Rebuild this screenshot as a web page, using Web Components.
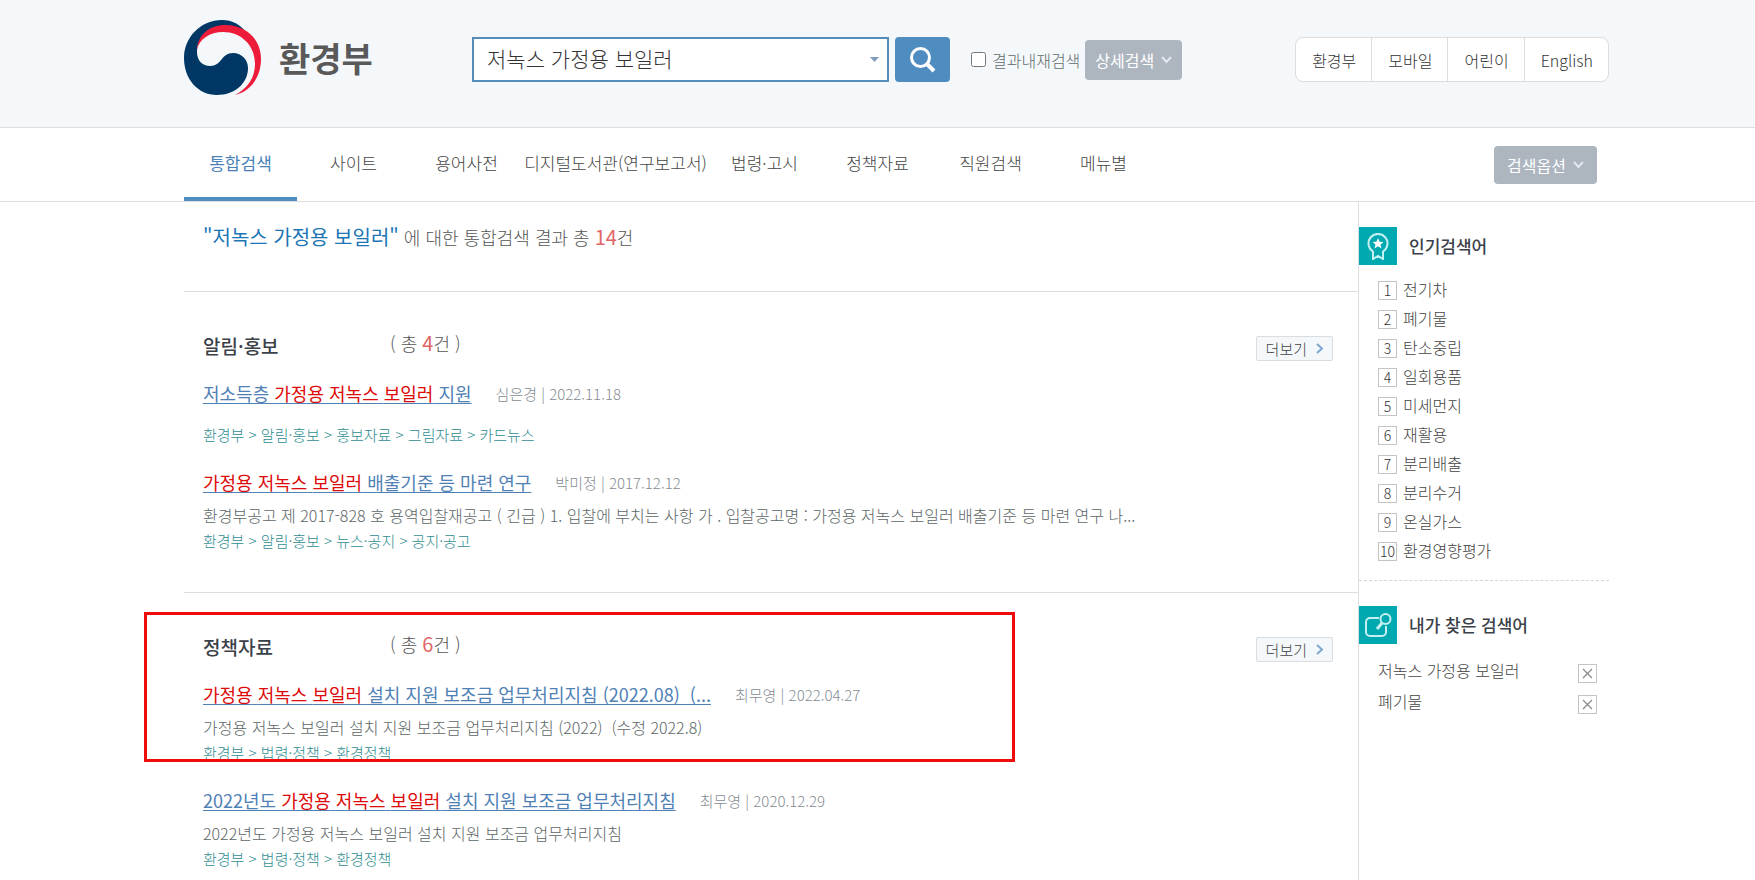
<!DOCTYPE html>
<html lang="ko">
<head>
<meta charset="utf-8">
<title>환경부 통합검색</title>
<style>
    body {
        margin: 0;
        background: #fff;
        color: #4c4c4c;
        font-family: "Noto Sans CJK KR", sans-serif;
        font-weight: 300;
        font-size: 16px;
        --gutter-left: 184px;
        --gutter-right: 146px;
        --line: #dddddd;
        --blue: #4f8dc1;
    }
</style>
</head>
<body>
<search-page></search-page>

<script>
const define = (name, html, setup) => {
    const template = document.createElement('template');
    template.innerHTML = html;

    window.customElements.define(name, class extends HTMLElement {
        constructor() {
            super();
            this.attachShadow({ mode: 'open' });
            this.shadowRoot.appendChild(template.content.cloneNode(true));
        }

        connectedCallback() {
            setup && setup(this, this.shadowRoot);
        }
    });
};

define('me-logo', `
    <style>
        :host { display: block; }
        a {
            display: flex;
            align-items: center;
            gap: 17px;
            color: #595959;
            font-size: 34px;
            line-height: 44px;
            font-weight: 700;
            text-decoration: none;
        }
        svg { display: block; width: 78px; height: 76px; }
    </style>
    <a href="#">
        <svg viewBox="0 0 78 76" aria-hidden="true">
            <path fill="#003764" d="M65 16C57 4 48 0 38 0C17 0 0 17 0 38C0 59 14 75 33 75C50 75 64 64 64 48C64 40 58 33 49 33C37 33 38 46 26 46C19 46 13 41 13 32C13 16 26 6 40 6C51 6 59 10 65 16Z"/>
            <path fill="#ee1c3b" d="M13 30C14 14 26 5 41 5C62 5 77 19 77 39C77 57 67 71 51 75C63 69 71 58 71 44C71 25 57 12 39 12C26 12 15 19 13 30Z"/>
        </svg>
        <span>환경부</span>
    </a>
`);

define('chevron-button', `
    <style>
        :host { display: block; }
        button {
            display: flex;
            align-items: center;
            gap: 7px;
            height: var(--button-height, 38px);
            padding: 0 var(--button-pad, 13px);
            border: 0;
            border-radius: 4px;
            background: #adb5bf;
            color: #fff;
            font: inherit;
            font-weight: 400;
        }
    </style>
    <button type="button">
        <slot></slot>
        <svg width="11" height="8" viewBox="0 0 11 8" fill="none" stroke="#e4e8ec" stroke-width="2" aria-hidden="true"><path d="M1 1L5.5 6L10 1"/></svg>
    </button>
`);

define('search-form', `
    <style>
        :host { display: block; }
        form { display: flex; align-items: center; }
        .box {
            box-sizing: border-box;
            display: flex;
            align-items: center;
            width: 417px;
            height: 45px;
            padding: 0 8px 0 13px;
            border: 2px solid #568cb8;
            background: #fff;
        }
        .box input {
            flex: 1;
            min-width: 0;
            padding: 0 0 4px;
            border: 0;
            outline: 0;
            background: none;
            color: #333;
            font: inherit;
            font-size: 21px;
        }
        .go {
            display: grid;
            place-items: center;
            width: 55px;
            height: 45px;
            margin: 0 21px 0 6px;
            padding: 0;
            border: 0;
            border-radius: 4px;
            background: var(--blue);
        }
        label {
            display: flex;
            align-items: center;
            gap: 6px;
            margin-right: 5px;
            color: #5f6c6c;
        }
        label input { width: 15px; height: 15px; margin: 0; }
        chevron-button { --button-height: 40px; --button-pad: 10px; }
    </style>
    <form>
        <div class="box">
            <input type="text" aria-label="검색어" value="저녹스 가정용 보일러">
            <svg width="9" height="5" viewBox="0 0 9 5" aria-hidden="true"><path fill="#7f9dbb" d="M0 0H9L4.5 5Z"/></svg>
        </div>
        <button class="go" type="button" aria-label="검색">
            <svg width="26" height="26" viewBox="0 0 26 26" fill="none" stroke="#fff" aria-hidden="true">
                <circle cx="10.500" cy="10.500" r="9" stroke-width="3"/>
                <path d="M17 17L24 24" stroke-width="4"/>
            </svg>
        </button>
        <label><input type="checkbox">결과내재검색</label>
        <chevron-button>상세검색</chevron-button>
    </form>
`);

define('site-links', `
    <style>
        :host { display: block; }
        nav {
            box-sizing: border-box;
            display: flex;
            height: 45px;
            border: 1px solid var(--line);
            border-radius: 8px;
            background: #fff;
        }
        a {
            display: flex;
            align-items: center;
            padding: 0 15px 0 16px;
            color: #333;
            text-decoration: none;
        }
        a + a { border-left: 1px solid var(--line); }
    </style>
    <nav>
        <a href="#">환경부</a>
        <a href="#">모바일</a>
        <a href="#">어린이</a>
        <a href="#">English</a>
    </nav>
`);

define('page-header', `
    <style>
        :host { display: block; border-bottom: 1px solid var(--line); background: #f4f8fb; }
        header {
            display: flex;
            align-items: flex-start;
            padding: 37px var(--gutter-right) 45px var(--gutter-left);
        }
        me-logo { width: 288px; margin: -17px 0 -14px; }
        site-links { margin-left: auto; }
    </style>
    <header>
        <me-logo></me-logo>
        <search-form></search-form>
        <site-links></site-links>
    </header>
`);

define('category-tabs', `
    <style>
        :host { display: block; border-bottom: 1px solid var(--line); }
        nav {
            display: flex;
            align-items: center;
            height: 73px;
            padding: 0 158px 0 var(--gutter-left);
        }
        a {
            box-sizing: border-box;
            width: 113px;
            height: 73px;
            border-bottom: 4px solid transparent;
            color: #444;
            font-size: 17px;
            line-height: 70px;
            text-align: center;
            white-space: nowrap;
            text-decoration: none;
        }
        a.wide { width: 185px; }
        a.active {
            border-color: var(--blue);
            color: #4a82b8;
            font-weight: 400;
        }
        chevron-button { margin-left: auto; }
    </style>
    <nav>
        <a class="active" href="#">통합검색</a>
        <a href="#">사이트</a>
        <a href="#">용어사전</a>
        <a class="wide" href="#">디지털도서관(연구보고서)</a>
        <a href="#">법령·고시</a>
        <a href="#">정책자료</a>
        <a href="#">직원검색</a>
        <a href="#">메뉴별</a>
        <chevron-button>검색옵션</chevron-button>
    </nav>
`);

define('result-summary', `
    <style>
        :host { display: block; border-bottom: 1px solid var(--line); }
        p {
            margin: 0;
            padding: 20px 19px 39px;
            color: #555;
            font-size: 18px;
            line-height: 30px;
        }
        b { color: #1c75b5; font-size: 20px; font-weight: 400; }
        em { color: #e06666; font-size: 20px; font-style: normal; font-weight: 400; }
    </style>
    <p><b>"저녹스 가정용 보일러"</b> 에 대한 통합검색 결과 총 <em>14</em>건</p>
`);

define('result-section', `
    <style>
        :host {
            display: block;
            position: relative;
            padding: 40px 25px 38px 19px;
            border-bottom: 1px solid var(--line);
        }
        :host(:last-child) { padding-bottom: 0; border: 0; }
        header { display: flex; align-items: center; height: 28px; margin-bottom: 13px; }
        h2 {
            width: 187px;
            margin: 0;
            color: #3b4148;
            font-size: 19px;
            line-height: 28px;
            font-weight: 500;
        }
        p { margin: 0 0 6px; color: #555; font-size: 18px; line-height: 24px; }
        em { color: #e06666; font-size: 20px; font-style: normal; font-weight: 400; }
        button {
            display: flex;
            align-items: center;
            gap: 9px;
            height: 25px;
            margin: 4px 0 0 auto;
            padding: 0 9px;
            border: 1px solid #d9dde0;
            border-radius: 2px;
            background: #f4f8fb;
            color: #444;
            font: inherit;
            font-size: 15px;
        }
        .list { display: grid; gap: 14px; }
    </style>
    <header>
        <h2></h2>
        <p>( 총 <em></em>건 )</p>
        <button type="button">더보기<svg width="7" height="11" viewBox="0 0 7 11" fill="none" stroke="#7fa9d0" stroke-width="2" aria-hidden="true"><path d="M1 1L6 5.5L1 10"/></svg></button>
    </header>
    <div class="list"><slot></slot></div>
    <slot name="mark"></slot>
`, (host, root) => {
    root.querySelector('h2').textContent = host.getAttribute('heading');
    root.querySelector('em').textContent = host.getAttribute('count');
});

define('result-item', `
    <style>
        :host { display: block; }
        .head { display: flex; align-items: center; gap: 24px; height: 40px; }
        a {
            color: #4f81b5;
            font-size: 18px;
            font-weight: 400;
            text-decoration: underline;
            text-decoration-thickness: 1px;
            text-underline-offset: 2px;
            white-space: pre;
        }
        ::slotted(mark) { background: none; color: #dd0a0a; }
        small { color: #848c93; font-size: 15px; }
        p { margin: 0; min-height: 9px; color: #5c6666; font-size: 16px; line-height: 26px; white-space: pre; }
        .path { color: #2f8d90; font-size: 15px; }
    </style>
    <div class="head"><a href="#"><slot></slot></a><small></small></div>
    <p class="text"></p>
    <p class="path"></p>
`, (host, root) => {
    root.querySelector('small').textContent = host.getAttribute('by');
    root.querySelector('.text').textContent = host.getAttribute('text') || '';
    root.querySelector('.path').textContent = host.getAttribute('path');
});

// red frame laid over a section
define('red-frame', `
    <style>
        :host {
            box-sizing: border-box;
            position: absolute;
            top: 19px;
            left: -40px;
            width: 871px;
            height: 150px;
            border: 3px solid #ee0c0c;
            pointer-events: none;
        }
    </style>
`);

define('side-panel', `
    <style>
        :host { display: block; padding: 25px 0 14px; }
        :host(:not(:last-child)) { border-bottom: 1px dashed #d5d5d5; }
        header { display: flex; align-items: center; gap: 12px; }
        .icon { display: grid; place-items: center; width: 38px; height: 38px; background: #00a9b0; }
        h2 { margin: 0; color: #3b4148; font-size: 17px; line-height: 24px; font-weight: 500; }
        .body { padding: 11px 12px 0 19px; }
    </style>
    <header>
        <div class="icon"><slot name="icon"></slot></div>
        <h2></h2>
    </header>
    <div class="body"><slot></slot></div>
`, (host, root) => {
    root.querySelector('h2').textContent = host.getAttribute('heading');
});

define('rank-list', `
    <style>
        :host { display: block; }
        ol { margin: 0; padding: 0; list-style: none; }
        li { display: flex; align-items: center; gap: 6px; height: 29px; }
        span {
            box-sizing: border-box;
            width: 19px;
            height: 19px;
            border: 1px solid #c4c4c4;
            color: #333;
            font-size: 14px;
            line-height: 17px;
            text-align: center;
        }
        a { color: #444; line-height: 24px; padding-bottom: 3px; text-decoration: none; }
    </style>
    <ol></ol>
`, (host, root) => {
    root.querySelector('ol').innerHTML = host.getAttribute('words').split(',')
        .map((word, i) => `<li><span>${i + 1}</span><a href="#">${word}</a></li>`).join('');
});

define('my-words', `
    <style>
        :host { display: block; padding-top: 2px; }
        ul { margin: 0; padding: 0; list-style: none; }
        li { display: flex; align-items: center; justify-content: space-between; height: 31px; }
        a { color: #444; line-height: 24px; padding-bottom: 5px; text-decoration: none; }
        button {
            display: grid;
            place-items: center;
            width: 19px;
            height: 19px;
            margin: 2px 0 0;
            padding: 0;
            border: 1px solid #c4c4c4;
            background: #fff;
        }
    </style>
    <ul></ul>
`, (host, root) => {
    root.querySelector('ul').innerHTML = host.getAttribute('words').split(',')
        .map((word) => `<li><a href="#">${word}</a><button type="button" aria-label="${word} 삭제"><svg width="11" height="11" viewBox="0 0 11 11" stroke="#8a8a8a" stroke-width="1.2"><path d="M1 1L10 10M10 1L1 10"/></svg></button></li>`).join('');
});

define('search-page', `
    <style>
        :host { display: flex; flex-direction: column; height: 100vh; }
        .columns {
            flex: 1;
            display: grid;
            grid-template-columns: 1fr 251px;
            min-height: 0;
            padding: 0 var(--gutter-right) 0 var(--gutter-left);
        }
        main { min-width: 0; }
        aside { border-left: 1px solid var(--line); }
    </style>
    <page-header></page-header>
    <category-tabs></category-tabs>
    <div class="columns">
        <main>
            <result-summary></result-summary>
            <result-section heading="알림·홍보" count="4">
                <result-item by="심은경 | 2022.11.18" path="환경부 > 알림·홍보 > 홍보자료 > 그림자료 > 카드뉴스">저소득층 <mark>가정용</mark> <mark>저녹스</mark> <mark>보일러</mark> 지원</result-item>
                <result-item by="박미정 | 2017.12.12" text="환경부공고 제 2017-828 호 용역입찰재공고 ( 긴급 ) 1. 입찰에 부치는 사항 가 . 입찰공고명 : 가정용 저녹스 보일러 배출기준 등 마련 연구 나..." path="환경부 > 알림·홍보 > 뉴스·공지 > 공지·공고"><mark>가정용</mark> <mark>저녹스</mark> <mark>보일러</mark> 배출기준 등 마련 연구</result-item>
            </result-section>
            <result-section heading="정책자료" count="6">
                <result-item by="최무영 | 2022.04.27" text="가정용 저녹스 보일러 설치 지원 보조금 업무처리지침 (2022)  (수정 2022.8)" path="환경부 > 법령·정책 > 환경정책"><mark>가정용</mark> <mark>저녹스</mark> <mark>보일러</mark> 설치 지원 보조금 업무처리지침 (2022.08)  (...</result-item>
                <result-item by="최무영 | 2020.12.29" text="2022년도 가정용 저녹스 보일러 설치 지원 보조금 업무처리지침" path="환경부 > 법령·정책 > 환경정책">2022년도 <mark>가정용</mark> <mark>저녹스</mark> <mark>보일러</mark> 설치 지원 보조금 업무처리지침</result-item>
                <red-frame slot="mark"></red-frame>
            </result-section>
        </main>
        <aside>
            <side-panel heading="인기검색어">
                <svg slot="icon" width="22" height="27" viewBox="0 0 22 27" fill="none" stroke="#c4f0f2" stroke-width="2" aria-hidden="true">
                    <path d="M6 18.500A9.500 9.500 0 1 1 16 18.500M6 18V26L11 23L16 26V18"/>
                    <path fill="#fff" stroke="none" d="M11 5L12.600 8.700L16.500 9L13.500 11.500L14.500 15.500L11 13.300L7.500 15.500L8.500 11.500L5.500 9L9.400 8.700Z"/>
                </svg>
                <rank-list words="전기차,폐기물,탄소중립,일회용품,미세먼지,재활용,분리배출,분리수거,온실가스,환경영향평가"></rank-list>
            </side-panel>
            <side-panel heading="내가 찾은 검색어">
                <svg slot="icon" width="27" height="24" viewBox="0 0 27 24" fill="none" stroke="#c4f0f2" stroke-width="2" aria-hidden="true">
                    <path d="M14 5H5A4 4 0 0 0 1 9V19A4 4 0 0 0 5 23H17A4 4 0 0 0 21 19V13"/>
                    <circle cx="20.500" cy="6" r="5"/>
                    <path d="M17 10L12 16" stroke-width="3"/>
                </svg>
                <my-words words="저녹스 가정용 보일러,폐기물"></my-words>
            </side-panel>
        </aside>
    </div>
`);
</script>
</body>
</html>
